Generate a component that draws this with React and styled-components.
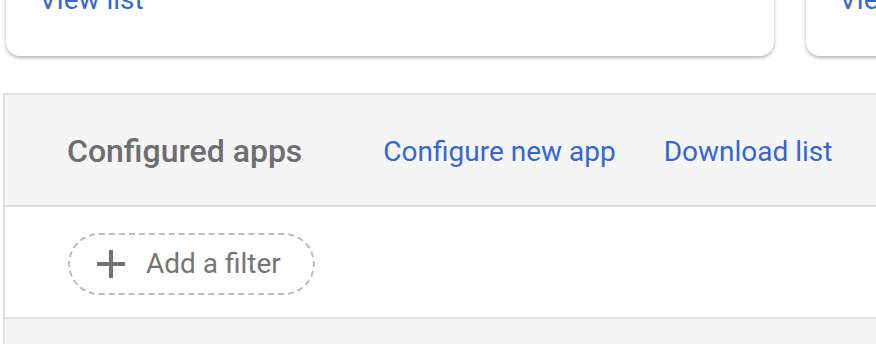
import React from 'react'
import styled, { createGlobalStyle } from 'styled-components'

const Global = createGlobalStyle`
  html, body {
    margin: 0;
    padding: 0;
    background: #ffffff;
    overflow: hidden;
    font-family: Roboto, "Liberation Sans", Arial, sans-serif;
  }
`

const Page = styled.div`
  width: 876px;
  height: 344px;
  overflow: hidden;
`

const CardRow = styled.div`
  display: flex;
  gap: 32px;
  padding-left: 6px;
  margin-top: -60px;
`

const Card = styled.div`
  flex: 0 0 768px;
  background: #ffffff;
  border-radius: 14px;
  box-shadow: 0 2px 3px rgba(0, 0, 0, 0.22), 0 1px 6px rgba(0, 0, 0, 0.1);
  padding: 40px 33px 36px;
  box-sizing: border-box;
`

const Link = styled.a`
  color: #3367d6;
  font-size: 28px;
  line-height: 40px;
  text-decoration: none;
  white-space: nowrap;
  margin-left: ${p => p.$gap || 0}px;
`

const HeaderLink = styled(Link)`
  margin-top: 4px;
`

const Panel = styled.div`
  margin: 37px 0 0 3px;
  width: 920px;
  border-left: 2px solid #e0e0e0;
  border-top: 2px solid #e0e0e0;
`

const Header = styled.div`
  display: flex;
  align-items: center;
  height: 110px;
  padding-left: 62px;
  background: #f5f5f5;
  border-bottom: 2px solid #e0e0e0;
`

const Title = styled.h2`
  margin: 2px 0 0;
  font-size: 32px;
  font-weight: 500;
  color: #6e6e6e;
  white-space: nowrap;
`

const FilterRow = styled.div`
  display: flex;
  align-items: center;
  box-sizing: border-box;
  height: 112px;
  padding: 3px 0 0 63px;
  background: #ffffff;
  border-bottom: 2px solid #e0e0e0;
`

const Chip = styled.button`
  display: flex;
  align-items: center;
  gap: 20px;
  height: 62px;
  padding: 0 32px 0 26px;
  box-sizing: border-box;
  border: 2px dashed #bdbdbd;
  border-radius: 31px;
  background: transparent;
  font-family: inherit;
  font-size: 28px;
  color: #757575;
  cursor: pointer;
`

const Footer = styled.div`
  height: 40px;
  background: #f4f4f4;
`

const Plus = () => (
  <svg width="30" height="30" viewBox="0 0 30 30">
    <path d="M15 1v28M1 15h28" stroke="#737373" strokeWidth="4" fill="none" />
  </svg>
)

export default function App() {
  return (
    <Page>
      <Global />
      <CardRow>
        <Card><Link href="#">View list</Link></Card>
        <Card><Link href="#">View list</Link></Card>
      </CardRow>
      <Panel>
        <Header>
          <Title>Configured apps</Title>
          <HeaderLink href="#" $gap={81}>Configure new app</HeaderLink>
          <HeaderLink href="#" $gap={48}>Download list</HeaderLink>
        </Header>
        <FilterRow>
          <Chip><Plus />Add a filter</Chip>
        </FilterRow>
        <Footer />
      </Panel>
    </Page>
  )
}
